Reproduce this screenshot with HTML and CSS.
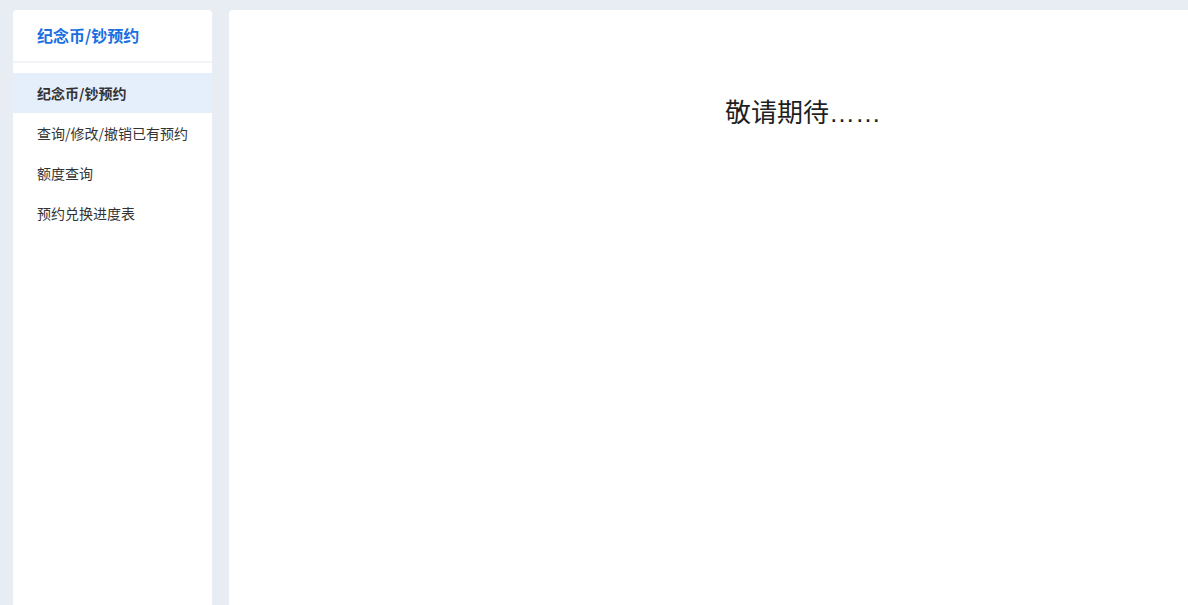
FILE: index.html
```html
<!DOCTYPE html>
<html lang="zh-CN">
<head>
<meta charset="utf-8">
<title>纪念币/钞预约</title>
<link rel="stylesheet" href="styles.css">
</head>
<body>
<div class="layout">
  <aside class="sidebar">
    <div class="side-header">纪念币/钞预约</div>
    <ul class="menu">
      <li class="menu-item active">纪念币/钞预约</li>
      <li class="menu-item">查询/修改/撤销已有预约</li>
      <li class="menu-item">额度查询</li>
      <li class="menu-item">预约兑换进度表</li>
    </ul>
  </aside>
  <main class="content">
    <div class="coming">敬请期待<span class="dots">……</span></div>
  </main>
</div>
</body>
</html>
```

FILE: styles.css
```css
html, body {
  margin: 0;
  padding: 0;
  height: 100%;
  overflow: hidden;
}
body {
  background: #e8edf4;
  font-family: "Noto Sans CJK SC", "Noto Sans", "Liberation Sans", sans-serif;
  color: #333;
}
.layout {
  display: flex;
  gap: 17px;
  padding: 10px 0 0 13px;
  height: 100%;
  box-sizing: border-box;
}
.sidebar {
  width: 199px;
  flex: none;
  background: #fff;
  border-radius: 4px 4px 0 0;
}
.side-header {
  height: 53px;
  box-sizing: border-box;
  padding: 13px 0 0 24px;
  font-size: 16px;
  line-height: 24px;
  font-weight: bold;
  color: #1b6fe0;
  border-bottom: 2px solid #f2f4f7;
}
.menu {
  list-style: none;
  margin: 10px 0 0;
  padding: 0;
}
.menu-item {
  height: 40px;
  line-height: 40px;
  padding-left: 24px;
  font-size: 14px;
  color: #333;
}
.menu-item.active {
  background: #e5eefb;
  font-weight: bold;
  color: #333;
}
.content {
  flex: 1;
  background: #fff;
  border-radius: 4px 0 0 0;
  padding-top: 83px;
}
.coming {
  padding-left: 496px;
  font-size: 26px;
  line-height: 36px;
  color: #1f1f1f;
}
.dots {
  font-family: "Liberation Sans", "DejaVu Sans", sans-serif;
}
```
